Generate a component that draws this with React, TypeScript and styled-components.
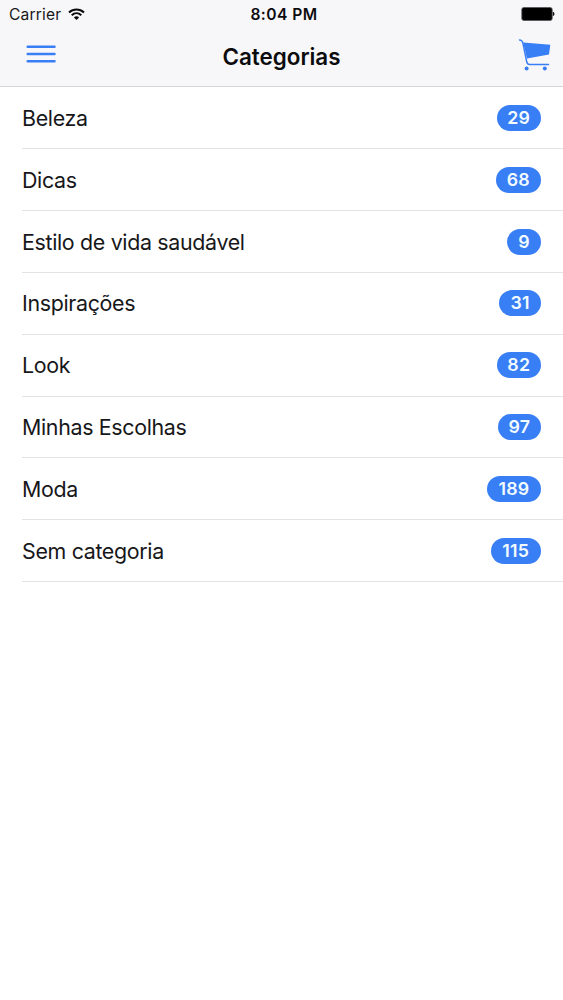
import React from "react";
import styled, { createGlobalStyle } from "styled-components";

const GlobalStyle = createGlobalStyle`
  * { box-sizing: border-box; }
  body { margin: 0; background: #fff; }
`;

const Screen = styled.div`
  min-height: 1000px;
  background: #fff;
  color: #17171a;
  font-family: Inter, "Liberation Sans", sans-serif;
`;

const Header = styled.header`
  height: 87px;
  background: #f7f7f9;
  border-bottom: 1px solid #d6d6d9;
`;

const StatusBar = styled.div`
  display: grid;
  grid-template-columns: 1fr auto 1fr;
  align-items: center;
  height: 28px;
  padding: 0 8px 0 9px;
  font-size: 15.6px;
  line-height: 20px;
`;

const Carrier = styled.div`
  display: flex;
  align-items: center;
  gap: 7px;
  letter-spacing: 0.17px;

  span {
    padding-top: 2px;
  }
`;

const Clock = styled.div`
  font-weight: 600;
  color: #0c0c0e;
  letter-spacing: 0.45px;
  padding: 1px 0 0 4px;
`;

const BatterySlot = styled.div`
  display: flex;
  justify-content: flex-end;
`;

const NavBar = styled.nav`
  display: grid;
  grid-template-columns: 1fr auto 1fr;
  align-items: center;
  height: 58px;
  padding: 0 12px 0 26px;
`;

const Title = styled.h1`
  margin: 0 0 0 -14px;
  font-size: 22.4px;
  line-height: 28px;
  font-weight: 600;
  color: #0c0c0e;
`;

const IconButton = styled.button<{ $end?: boolean }>`
  display: flex;
  justify-self: ${(p) => (p.$end ? "end" : "start")};
  padding: 0;
  margin-bottom: ${(p) => (p.$end ? 4 : 6)}px;
  border: 0;
  background: none;
  color: #387ef5;
`;

const List = styled.ul`
  margin: 0;
  padding: 0.7px 0 0 22px;
  list-style: none;
`;

const Row = styled.li`
  display: flex;
  align-items: center;
  justify-content: space-between;
  height: 61.8px;
  padding-right: 22px;
  border-bottom: 1px solid #e3e3e5;
`;

const Label = styled.span`
  font-size: 21.4px;
  line-height: 28px;
  letter-spacing: -0.33px;
`;

const Badge = styled.span<{ $width: number }>`
  display: flex;
  align-items: center;
  justify-content: center;
  width: ${(p) => p.$width}px;
  height: 26px;
  border-radius: 13px;
  background: #387ef5;
  color: #f2fbff;
  font-size: 17.8px;
  line-height: 26px;
  font-weight: 600;
  letter-spacing: 0.2px;
`;

const categories = [
  { name: "Beleza", count: 29, width: 44.5 },
  { name: "Dicas", count: 68, width: 45.5 },
  { name: "Estilo de vida saudável", count: 9, width: 34 },
  { name: "Inspirações", count: 31, width: 42 },
  { name: "Look", count: 82, width: 44.5 },
  { name: "Minhas Escolhas", count: 97, width: 43.5 },
  { name: "Moda", count: 189, width: 54 },
  { name: "Sem categoria", count: 115, width: 50.5 },
];

const WifiIcon = () => (
  <svg width="17" height="13" viewBox="0 0 17 13" fill="none" stroke="#0c0c0e" strokeWidth="2">
    <path d="M1 4.5C5.2.5 11.8.5 16 4.5" />
    <path d="M3.7 7.3C6.5 4.7 10.5 4.7 13.3 7.3" />
    <path d="M8.5 12 5.9 9.4C7.4 8 9.6 8 11.1 9.4Z" fill="#0c0c0e" stroke="none" />
  </svg>
);

const BatteryIcon = () => (
  <svg width="34" height="14" viewBox="0 0 34 14">
    <rect x="0.8" y="0.5" width="30.4" height="13" rx="2" fill="#000" stroke="#55555a" strokeWidth="0.8" />
    <path d="M31.8 4.8c2.2.6 2.2 3.8 0 4.4Z" fill="#111" />
  </svg>
);

const MenuIcon = () => (
  <svg width="30" height="18" viewBox="0 0 30 18" fill="none" stroke="currentColor" strokeWidth="2.5" strokeLinecap="round">
    <path d="M1.7 1.8h26.8M1.7 9h26.8M1.7 16.2h26.8" />
  </svg>
);

const CartIcon = () => (
  <svg width="33" height="33" viewBox="0 0 33 33" fill="currentColor">
    <path d="M5.2 3.4 32.3 5.8 31 15.6 9 19.6Z" />
    <path d="M1.5 .9C3.2 1 4.2 1.6 4.8 3.6L8.7 22.6C9.2 24.9 10 25.6 11.6 25.6H30.5" fill="none" stroke="currentColor" strokeWidth="1.5" strokeLinecap="round" />
    <circle cx="8.6" cy="29.6" r="2" />
    <circle cx="26.8" cy="29.6" r="2" />
  </svg>
);

export default function App() {
  return (
    <Screen>
      <GlobalStyle />
      <Header>
        <StatusBar>
          <Carrier>
            <span>Carrier</span>
            <WifiIcon />
          </Carrier>
          <Clock>8:04 PM</Clock>
          <BatterySlot>
            <BatteryIcon />
          </BatterySlot>
        </StatusBar>
        <NavBar>
          <IconButton aria-label="Menu">
            <MenuIcon />
          </IconButton>
          <Title>Categorias</Title>
          <IconButton $end aria-label="Carrinho">
            <CartIcon />
          </IconButton>
        </NavBar>
      </Header>
      <List>
        {categories.map((c) => (
          <Row key={c.name}>
            <Label>{c.name}</Label>
            <Badge $width={c.width}>{c.count}</Badge>
          </Row>
        ))}
      </List>
    </Screen>
  );
}
